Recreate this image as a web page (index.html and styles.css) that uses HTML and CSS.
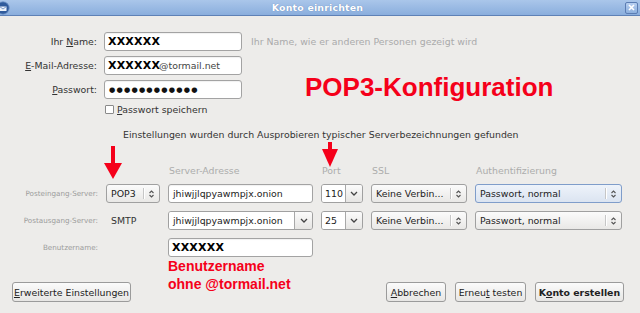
FILE: index.html
```html
<!DOCTYPE html>
<html lang="de">
<head>
<meta charset="utf-8">
<title>Konto einrichten</title>
<link rel="stylesheet" href="styles.css">
</head>
<body>
<div class="window">
  <header class="titlebar">
    <svg class="app-icon" width="14" height="14" viewBox="0 0 14 14">
      <circle cx="7" cy="7" r="6.2" fill="#2f5b9c" stroke="#6f93c8" stroke-width="0.8"/>
      <path d="M3.5 5.5 L10.5 5.5 L10.5 10 L3.5 10 Z" fill="#eef3fa"/>
      <path d="M3.5 5.5 L7 8 L10.5 5.5" fill="none" stroke="#5f84bb" stroke-width="0.8"/>
    </svg>
    <span class="title">Konto einrichten</span>
    <span class="close">
      <svg width="7" height="7" viewBox="0 0 7 7"><path d="M1 1 6 6M6 1 1 6" stroke="#fff" stroke-width="1.6"/></svg>
    </span>
  </header>

  <main class="content">
    <section class="identity">
      <label class="label">Ihr <u>N</u>ame:</label>
      <div class="entry"><span class="redacted">XXXXXX</span></div>
      <span class="hint">Ihr Name, wie er anderen Personen gezeigt wird</span>

      <label class="label"><u>E</u>-Mail-Adresse:</label>
      <div class="entry"><span class="redacted">XXXXXX</span><span class="mail">@tormail.net</span></div>
      <span></span>

      <label class="label"><u>P</u>asswort:</label>
      <div class="entry"><span class="dots">●●●●●●●●●●●●</span></div>
      <span></span>

      <span></span>
      <div class="check"><span class="checkbox"></span><span><u>P</u>asswort speichern</span></div>
      <span></span>
    </section>

    <p class="found">Einstellungen wurden durch Ausprobieren typischer Serverbezeichnungen gefunden</p>

    <section class="servers">
      <span></span>
      <span></span>
      <span class="colhead">Server-Adresse</span>
      <span class="colhead">Port</span>
      <span class="colhead">SSL</span>
      <span class="colhead">Authentifizierung</span>

      <span class="small-label">Posteingang-Server:</span>
      <div class="combo"><span class="combo-text">POP3</span><span class="sep"></span><span class="arrow-box"><svg width="7" height="10" viewBox="0 0 7 10"><path d="M1.5 4 3.5 2 5.5 4M1.5 6 3.5 8 5.5 6" fill="none" stroke="#555" stroke-width="1.1"/></svg></span></div>
      <div class="entry server">jhiwjjlqpyawmpjx.onion</div>
      <div class="entry-combo"><span class="ec-text">110</span><span class="ec-btn"><svg width="8" height="5" viewBox="0 0 8 5"><path d="M1 1 4 4 7 1" fill="none" stroke="#444" stroke-width="1.3"/></svg></span></div>
      <div class="combo"><span class="combo-text">Keine Verbin...</span><span class="sep"></span><span class="arrow-box"><svg width="7" height="10" viewBox="0 0 7 10"><path d="M1.5 4 3.5 2 5.5 4M1.5 6 3.5 8 5.5 6" fill="none" stroke="#555" stroke-width="1.1"/></svg></span></div>
      <div class="combo focused"><span class="combo-text">Passwort, normal</span><span class="sep"></span><span class="arrow-box"><svg width="7" height="10" viewBox="0 0 7 10"><path d="M1.5 4 3.5 2 5.5 4M1.5 6 3.5 8 5.5 6" fill="none" stroke="#555" stroke-width="1.1"/></svg></span></div>

      <span class="small-label">Postausgang-Server:</span>
      <span class="plain">SMTP</span>
      <div class="entry-combo"><span class="ec-text server">jhiwjjlqpyawmpjx.onion</span><span class="ec-btn wide"><svg width="8" height="5" viewBox="0 0 8 5"><path d="M1 1 4 4 7 1" fill="none" stroke="#444" stroke-width="1.3"/></svg></span></div>
      <div class="entry-combo"><span class="ec-text">25</span><span class="ec-btn"><svg width="8" height="5" viewBox="0 0 8 5"><path d="M1 1 4 4 7 1" fill="none" stroke="#444" stroke-width="1.3"/></svg></span></div>
      <div class="combo"><span class="combo-text">Keine Verbin...</span><span class="sep"></span><span class="arrow-box"><svg width="7" height="10" viewBox="0 0 7 10"><path d="M1.5 4 3.5 2 5.5 4M1.5 6 3.5 8 5.5 6" fill="none" stroke="#555" stroke-width="1.1"/></svg></span></div>
      <div class="combo"><span class="combo-text">Passwort, normal</span><span class="sep"></span><span class="arrow-box"><svg width="7" height="10" viewBox="0 0 7 10"><path d="M1.5 4 3.5 2 5.5 4M1.5 6 3.5 8 5.5 6" fill="none" stroke="#555" stroke-width="1.1"/></svg></span></div>

      <span class="small-label">Benutzername:</span>
      <span></span>
      <div class="entry"><span class="redacted">XXXXXX</span></div>
      <span></span>
      <span></span>
      <span></span>
    </section>

    <footer class="buttons">
      <button class="btn btn-advanced"><u>E</u>rweiterte Einstellungen</button>
      <span class="spacer"></span>
      <button class="btn btn-cancel"><u>A</u>bbrechen</button>
      <button class="btn btn-retest">Erneu<u>t</u> testen</button>
      <button class="btn btn-create">K<u>o</u>nto erstellen</button>
    </footer>
  </main>

  <div class="note note-pop3">POP3-Konfiguration</div>
  <div class="note note-user">Benutzername<br>ohne @tormail.net</div>
  <svg class="arrow arrow-proto" width="18" height="33" viewBox="0 0 18 33"><rect x="7" y="0" width="4" height="18" fill="#f5001a"/><polygon points="0,17 18,17 9,33" fill="#f5001a"/></svg>
  <svg class="arrow arrow-port" width="16" height="25" viewBox="0 0 16 25"><rect x="6" y="0" width="4" height="8" fill="#f5001a"/><polygon points="0,7 16,7 8,25" fill="#f5001a"/></svg>
</div>
</body>
</html>
```

FILE: styles.css
```css
* { box-sizing: border-box; }

html, body {
  margin: 0;
  padding: 0;
}

body {
  width: 640px;
  height: 313px;
  overflow: hidden;
  background: #edecea;
  font-family: "DejaVu Sans", sans-serif;
  font-size: 9.4px;
  color: #2e2e2e;
}

u { text-decoration: underline; text-underline-offset: 1px; }

.window {
  position: relative;
  width: 640px;
  height: 313px;
}

/* title bar */
.titlebar {
  height: 16px;
  display: flex;
  align-items: center;
  background: linear-gradient(#aac6ea, #8aaedd);
  border-bottom: 1px solid #5e81b6;
}

.app-icon {
  margin-left: -4px;
  flex: none;
}

.title {
  flex: 1;
  text-align: center;
  color: #fff;
  font-weight: bold;
  font-size: 9.4px;
  letter-spacing: 0.2px;
  text-shadow: 0 0 1px #5a7cb0;
}

.close {
  width: 13px;
  height: 12px;
  margin-right: 2px;
  border: 1px solid #5b7db3;
  border-radius: 2px;
  background: linear-gradient(#b7cff0, #8db0de);
  display: flex;
  align-items: center;
  justify-content: center;
}

/* identity form */
.content { padding-top: 16px; }

.identity {
  display: grid;
  grid-template-columns: 97px 138px 1fr;
  grid-template-rows: 19px 19px 19px 11px;
  column-gap: 7px;
  row-gap: 5px;
  align-items: center;
}

.label {
  text-align: right;
  color: #333;
}

.hint {
  margin-left: 2px;
  color: #aaa;
  white-space: nowrap;
}

.entry {
  height: 19px;
  display: flex;
  align-items: center;
  padding: 0 4px 0 3px;
  background: #fff;
  border: 1px solid #a3a3a3;
  border-radius: 3px;
  box-shadow: inset 0 1px 1px rgba(0,0,0,0.06);
  white-space: nowrap;
  overflow: hidden;
  color: #222;
}

.entry.server { padding-left: 4px; }

.redacted {
  font-weight: bold;
  font-size: 11px;
  letter-spacing: 0.2px;
  color: #000;
}

.mail { color: #444; margin-left: -1px; }

.dots {
  font-size: 7.2px;
  letter-spacing: 1.2px;
  color: #111;
  margin-left: 1px;
}

.check {
  display: flex;
  align-items: center;
  gap: 3px;
  padding-left: 1px;
  white-space: nowrap;
  color: #333;
}

.checkbox {
  width: 9px;
  height: 9px;
  background: #fff;
  border: 1px solid #8a8a8a;
  border-radius: 1px;
}

.found {
  margin: 14px 0 0 123px;
  line-height: 12px;
  color: #333;
  white-space: nowrap;
}

/* server table */
.servers {
  margin-top: 23px;
  display: grid;
  grid-template-columns: 98px 54px 145px 42px 96px 147px;
  grid-template-rows: 12px 19px 19px 19px;
  column-gap: 8px;
  row-gap: 8px;
  align-items: center;
}

.colhead {
  color: #acacac;
  padding-left: 1px;
  white-space: nowrap;
}

.small-label {
  text-align: right;
  font-size: 7.2px;
  color: #9c9c9c;
  white-space: nowrap;
}

.plain {
  padding-left: 5px;
  color: #333;
}

.combo {
  height: 19px;
  display: flex;
  align-items: center;
  padding-left: 4px;
  border: 1px solid #a0a0a0;
  border-radius: 3px;
  background: linear-gradient(#fbfbfb, #e9e8e6);
  color: #222;
  white-space: nowrap;
}

.combo.focused {
  background: linear-gradient(#eef3fa, #dbe4f1);
  border-color: #7f9dca;
}

.combo-text { flex: 1; overflow: hidden; }

.sep {
  width: 1px;
  height: 11px;
  background: #c6c6c6;
  box-shadow: 1px 0 0 #fff;
}

.arrow-box {
  width: 15px;
  display: flex;
  justify-content: center;
  align-items: center;
}

.entry-combo {
  height: 19px;
  display: flex;
  border: 1px solid #a0a0a0;
  border-radius: 3px;
  overflow: hidden;
}

.ec-text {
  flex: 1;
  display: flex;
  align-items: center;
  padding-left: 3px;
  background: #fff;
  color: #222;
  white-space: nowrap;
  overflow: hidden;
}

.ec-text.server { padding-left: 4px; }

.ec-btn {
  width: 17px;
  display: flex;
  align-items: center;
  justify-content: center;
  border-left: 1px solid #a8a8a8;
  background: linear-gradient(#fbfbfb, #e6e5e3);
}

.ec-btn.wide { width: 18px; }

/* buttons */
.buttons {
  margin-top: 25px;
  display: flex;
  gap: 9px;
  padding: 0 16px 0 12px;
}

.spacer { flex: 1; }

.btn {
  height: 20px;
  padding: 0;
  font-family: "DejaVu Sans", sans-serif;
  font-size: 9.4px;
  color: #222;
  border: 1px solid #9b9b9b;
  border-radius: 3px;
  background: linear-gradient(#fbfbfb, #e7e6e4);
  white-space: nowrap;
}

.btn-advanced { width: 119px; }
.btn-cancel { width: 60px; }
.btn-retest { width: 71px; }
.btn-create { width: 89px; font-weight: bold; }

/* red annotations */
.note {
  position: absolute;
  font-family: "Liberation Sans", Arial, sans-serif;
  font-weight: bold;
  color: #f5001a;
  white-space: nowrap;
}

.note-pop3 {
  left: 305px;
  top: 74px;
  font-size: 26px;
  line-height: 26px;
}

.note-user {
  left: 168px;
  top: 257px;
  font-size: 14px;
  line-height: 18px;
}

.arrow { position: absolute; }
.arrow-proto { left: 104px; top: 146px; }
.arrow-port { left: 322px; top: 142px; }
```
